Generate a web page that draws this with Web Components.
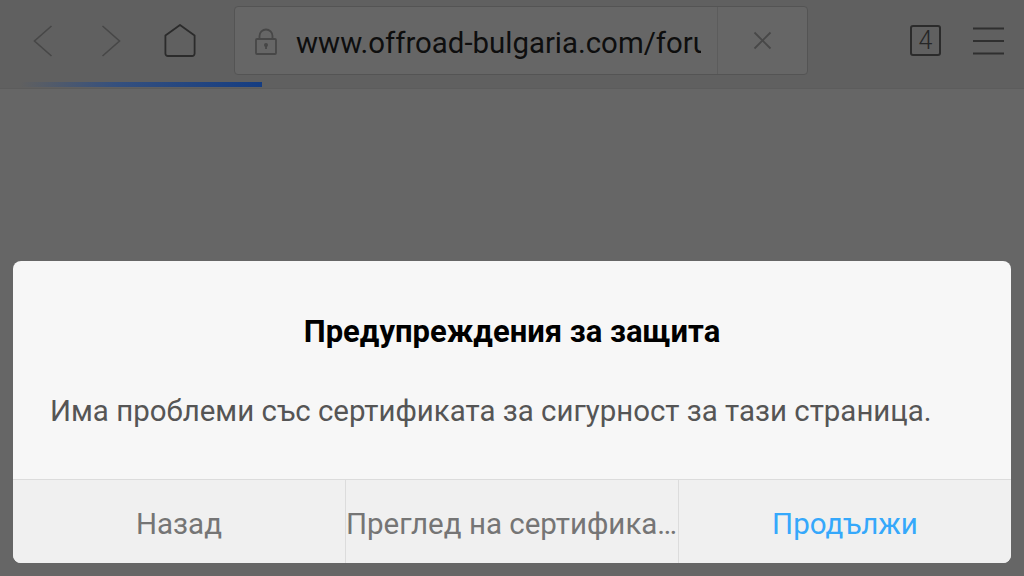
<!doctype html>
<html lang="bg">
<head>
<meta charset="utf-8">
<title>Предупреждения за защита</title>
<style>
  html, body { margin: 0; height: 100%; }
  body {
    width: 1024px;
    height: 576px;
    overflow: hidden;
    background: #666;
    font-family: Roboto, "Liberation Sans", sans-serif;
    display: flex;
    flex-direction: column;
  }
</style>
</head>
<body>
<browser-toolbar url="www.offroad-bulgaria.com/forum" tabs="4"></browser-toolbar>
<page-area>
  <alert-dialog heading="Предупреждения за защита">
    Има проблеми със сертификата за сигурност за тази страница.
    <dialog-button slot="actions">Назад</dialog-button>
    <dialog-button slot="actions">Преглед на сертификата</dialog-button>
    <dialog-button slot="actions" primary>Продължи</dialog-button>
  </alert-dialog>
</page-area>
<script>
class BrowserToolbar extends HTMLElement {
  constructor() {
    super()
    this.attachShadow({ mode: 'open' })
    const url = this.getAttribute('url')
    const tabs = this.getAttribute('tabs')
    this.shadowRoot.innerHTML = `
      <style>
        :host {
          display: flex;
          position: relative;
          box-sizing: border-box;
          height: 89px;
          flex: none;
          padding: 6px 0 13px 0;
          background: #606060;
          border-bottom: 1px solid #5c5c5c;
        }
        svg { display: block; fill: none; }
        .nav { display: flex; width: 234px; flex: none; align-items: center; padding-left: 33px; box-sizing: border-box; }
        .back { margin-right: 48px; }
        .forward { margin-right: 43px; }
        .urlBox {
          flex: none;
          width: 574px;
          display: flex;
          box-sizing: border-box;
          border: 1px solid #545454;
          border-radius: 4px;
          background: #666;
        }
        .lock { margin: 21px 19px 0 20px; flex: none; }
        .url {
          flex: none;
          width: 405px;
          overflow: hidden;
          white-space: nowrap;
          font: 29.400px/72px Roboto, sans-serif;
          color: #0e0e0e;
        }
        .clear {
          flex: none;
          width: 90px;
          margin-left: auto;
          box-sizing: border-box;
          border-left: 1px solid #5c5c5c;
          display: flex;
          align-items: center;
          justify-content: center;
        }
        .tools { flex: 1; display: flex; align-items: center; padding-left: 102px; }
        .tabs {
          box-sizing: border-box;
          width: 31px;
          height: 31px;
          border: 2px solid #2b2b2b;
          border-radius: 3px;
          font: 300 25px/27px Roboto, sans-serif;
          color: #262626;
          text-align: center;
        }
        .menu { margin-left: 32px; }
        .progress {
          position: absolute;
          left: 20px;
          top: 82px;
          width: 242px;
          height: 5px;
          background: linear-gradient(90deg, rgba(24, 62, 130, 0) 0%, #35507e 40%, #153d82 100%);
        }
      </style>
      <div class="nav">
        <svg class="back" width="20" height="32" viewBox="0 0 20 32"><path d="M18.500 1 1.500 16l17 15" stroke="#474747" stroke-width="1.600"/></svg>
        <svg class="forward" width="20" height="32" viewBox="0 0 20 32"><path d="M1.500 1l17 15-17 15" stroke="#474747" stroke-width="1.600"/></svg>
        <svg width="32" height="33" viewBox="0 0 32 33"><path d="M16 1 30.600 11.500V29.500a2.500 2.500 0 0 1-2.500 2.500H3.900a2.500 2.500 0 0 1-2.500-2.500V11.500Z" stroke="#2b2b2b" stroke-width="1.800" stroke-linejoin="round"/></svg>
      </div>
      <div class="urlBox">
        <svg class="lock" width="22" height="27" viewBox="0 0 22 27"><rect x="1" y="11" width="20" height="15" rx="1" stroke="#474747" stroke-width="1.800"/><path d="M4.500 11V8a6.500 6.500 0 0 1 13 0v3" stroke="#474747" stroke-width="1.800"/><circle cx="11" cy="17" r="2" fill="#474747"/><path d="M11 17v4" stroke="#474747" stroke-width="1.800"/></svg>
        <div class="url">${url}</div>
        <div class="clear">
          <svg width="19" height="19" viewBox="0 0 19 19"><path d="M1.500 1.500l16 16m0-16-16 16" stroke="#484848" stroke-width="1.800"/></svg>
        </div>
      </div>
      <div class="tools">
        <div class="tabs">${tabs}</div>
        <svg class="menu" width="31" height="28" viewBox="0 0 31 28"><path d="M0 1.500h31M0 14h31M0 26.500h31" stroke="#2f2f2f" stroke-width="1.800"/></svg>
      </div>
      <div class="progress"></div>
    `
  }
}

class PageArea extends HTMLElement {
  constructor() {
    super()
    this.attachShadow({ mode: 'open' })
    this.shadowRoot.innerHTML = `
      <style>
        :host {
          display: flex;
          flex: 1;
          flex-direction: column;
          justify-content: flex-end;
          padding: 0 13px 13px 13px;
          background: #666;
        }
      </style>
      <slot></slot>
    `
  }
}

class AlertDialog extends HTMLElement {
  constructor() {
    super()
    this.attachShadow({ mode: 'open' })
    this.shadowRoot.innerHTML = `
      <style>
        :host {
          display: block;
          width: 998px;
          border-radius: 8px;
          overflow: hidden;
          background: #f7f7f7;
        }
        .body { height: 218px; box-sizing: border-box; padding-top: 53px; }
        h2 {
          margin: 0;
          font: 700 31px/36px Roboto, sans-serif;
          color: #000;
          text-align: center;
        }
        .message {
          margin-top: 43px;
          padding: 0 37px;
          font: 400 29.440px/36px Roboto, sans-serif;
          color: #555;
        }
        .actions {
          display: grid;
          grid-template-columns: 332px 333px 333px;
          height: 84px;
          box-sizing: border-box;
          border-top: 1px solid #dcdcdc;
          background: #f0f0f0;
        }
      </style>
      <div class="body">
        <h2>${this.getAttribute('heading')}</h2>
        <div class="message"><slot></slot></div>
      </div>
      <div class="actions"><slot name="actions"></slot></div>
    `
  }
}

class DialogButton extends HTMLElement {
  constructor() {
    super()
    this.attachShadow({ mode: 'open' })
    this.shadowRoot.innerHTML = `
      <style>
        :host {
          display: flex;
          align-items: center;
          justify-content: center;
          min-width: 0;
          box-sizing: border-box;
          border-left: 1px solid #dcdcdc;
          color: #757575;
          font: 400 29.500px/36px Roboto, sans-serif;
          padding-top: 4px;
        }
        :host(:first-child) { border-left: 0; }
        :host([primary]) { color: #35a8fb; }
        span {
          display: block;
          overflow: hidden;
          white-space: nowrap;
          text-overflow: ellipsis;
        }
      </style>
      <span><slot></slot></span>
    `
  }
}

customElements.define('browser-toolbar', BrowserToolbar)
customElements.define('page-area', PageArea)
customElements.define('alert-dialog', AlertDialog)
customElements.define('dialog-button', DialogButton)
</script>
</body>
</html>
